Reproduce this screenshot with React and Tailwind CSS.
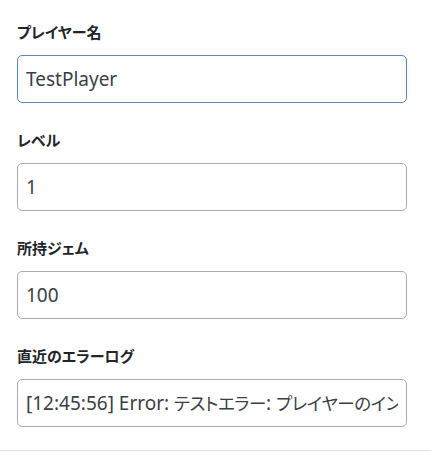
import React from "react";

const ff = {
  fontFamily: '"Noto Sans", "Noto Sans CJK JP", sans-serif',
  fontFeatureSettings: '"palt"',
};

function Label({ children }) {
  return (
    <label className="block h-[22px] leading-[22px] mb-[12px] text-[15px] font-bold text-[#212529]">
      {children}
    </label>
  );
}

function Field({ label, value, focus }) {
  return (
    <div className="flex flex-col">
      <Label>{label}</Label>
      <input
        readOnly
        value={value}
        className={
          "block w-[390px] h-[48px] rounded-[5px] border bg-white pl-[8px] pr-[8px] text-[19px] text-[#3a3f44] outline-none " +
          (focus ? "border-[#5a88bc]" : "border-[#a8adb3]")
        }
        style={ff}
      />
    </div>
  );
}

const J = ({ children }) => (
  <span className="text-[17.5px] tracking-[-0.4px]" style={{ fontFamily: '"Noto Sans CJK JP", sans-serif', fontFeatureSettings: '"palt"' }}>
    {children}
  </span>
);

export default function App() {
  return (
    <div
      className="w-[431px] bg-white pt-[21px] pb-[23px] px-[17px] border-b border-[#dee2e6]"
      style={ff}
    >
      <div className="flex flex-col gap-[26px] w-[390px]">
        <Field label="プレイヤー名" value="TestPlayer" focus />
        <Field label="レベル" value="1" />
        <Field label="所持ジェム" value="100" />
        <div className="flex flex-col">
          <Label>直近のエラーログ</Label>
          <div
            role="textbox"
            aria-readonly="true"
            className="flex items-center w-[390px] h-[48px] rounded-[5px] border border-[#a8adb3] bg-white pl-[8px] pr-[8px] overflow-hidden"
          >
            <div className="overflow-hidden whitespace-nowrap text-[19px] text-[#3a3f44] leading-[26px]">
              [12:45:56] Error: <J>テストエラー</J>: <J>プレイヤーのインベントリの読み込みに失敗しました</J>
            </div>
          </div>
        </div>
      </div>
    </div>
  );
}
